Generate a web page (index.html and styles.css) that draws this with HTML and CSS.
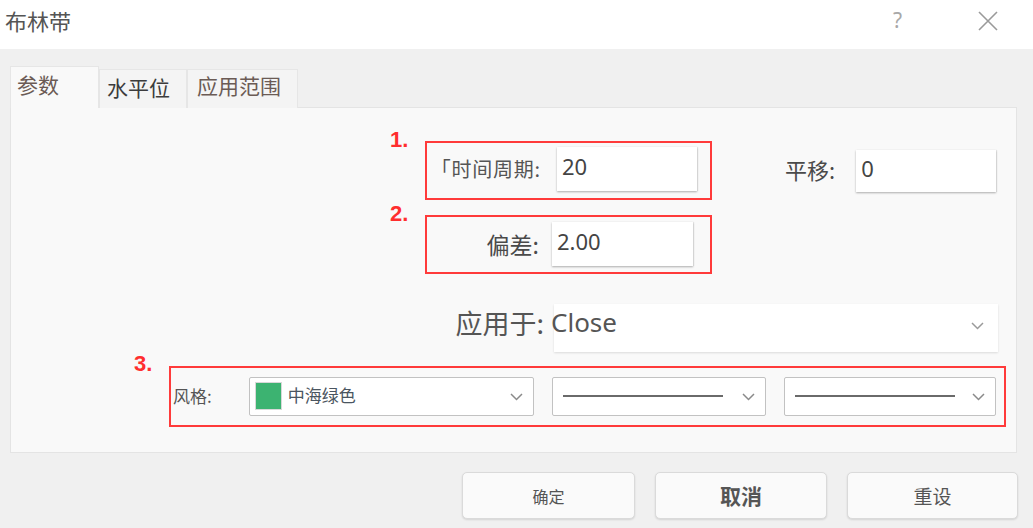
FILE: index.html
```html
<!DOCTYPE html>
<html lang="zh">
<head>
<meta charset="utf-8">
<title>布林带</title>
<link rel="stylesheet" href="styles.css">
</head>
<body>
<div class="dialog">
  <header class="titlebar">
    <span class="title">布林带</span>
    <div class="title-actions">
      <span class="help">?</span>
      <svg class="close" width="20" height="20" viewBox="0 0 20 20"><path d="M1 1 L19 19 M19 1 L1 19" stroke="#9a9a9a" stroke-width="1.6" fill="none"/></svg>
    </div>
  </header>
  <main class="body">
    <nav class="tabs">
      <div class="tab active">参数</div>
      <div class="tab tab-dark">水平位</div>
      <div class="tab tab-range">应用范围</div>
    </nav>
    <section class="panel">
      <div class="row row-period">
        <div class="mark-box box-period">
          <span class="mark">1.</span>
          <span class="label label-sm">「时间周期:</span>
          <div class="input">20</div>
        </div>
        <div class="field-shift">
          <span class="label label-lg">平移:</span>
          <div class="input input-shift">0</div>
        </div>
      </div>
      <div class="row row-dev">
        <div class="mark-box box-dev">
          <span class="mark">2.</span>
          <span class="label label-lg">偏差:</span>
          <div class="input">2.00</div>
        </div>
      </div>
      <div class="row row-apply">
        <span class="apply-label">应用于:</span>
        <div class="apply-select">
          <span class="apply-value">Close</span>
          <svg class="chev" width="13" height="8" viewBox="0 0 13 8"><path d="M1 1 L6.5 6.5 L12 1" stroke="#9a9a9a" stroke-width="1.5" fill="none"/></svg>
        </div>
      </div>
      <div class="row row-style">
        <div class="mark-box box-style">
          <span class="mark mark-3">3.</span>
          <span class="style-label">风格:</span>
          <div class="combo combo-color">
            <span class="swatch"></span>
            <span class="combo-text">中海绿色</span>
            <svg class="chev" width="13" height="8" viewBox="0 0 13 8"><path d="M1 1 L6.5 6.5 L12 1" stroke="#8a8a8a" stroke-width="1.5" fill="none"/></svg>
          </div>
          <div class="combo combo-line1">
            <span class="line"></span>
            <svg class="chev" width="13" height="8" viewBox="0 0 13 8"><path d="M1 1 L6.5 6.5 L12 1" stroke="#8a8a8a" stroke-width="1.5" fill="none"/></svg>
          </div>
          <div class="combo combo-line2">
            <span class="line"></span>
            <svg class="chev" width="13" height="8" viewBox="0 0 13 8"><path d="M1 1 L6.5 6.5 L12 1" stroke="#8a8a8a" stroke-width="1.5" fill="none"/></svg>
          </div>
        </div>
      </div>
    </section>
    <div class="buttons">
      <button class="btn btn-ok">确定</button>
      <button class="btn btn-cancel">取消</button>
      <button class="btn btn-reset">重设</button>
    </div>
  </main>
</div>
</body>
</html>
```

FILE: styles.css
```css
* { box-sizing: border-box; }
html, body { margin: 0; padding: 0; }
body {
  width: 1033px;
  height: 528px;
  overflow: hidden;
  background: #f0f0f0;
  font-family: "Noto Sans", "Noto Sans CJK SC", sans-serif;
  color: #555;
}
.dialog { width: 1033px; height: 528px; }

.titlebar {
  height: 49px;
  background: #ffffff;
  display: flex;
  align-items: center;
  justify-content: space-between;
  padding: 0 35px 0 5px;
}
.title {
  font-family: "Noto Sans CJK SC", sans-serif;
  font-size: 22px;
  color: #555;
  line-height: 1;
  margin-top: -9px;
}
.title-actions {
  display: flex;
  align-items: center;
  gap: 76px;
  margin-top: -8px;
}
.help {
  font-family: "Noto Sans", sans-serif;
  font-size: 21px;
  color: #a8a8a8;
  line-height: 1;
}
.close { display: block; }

.tabs {
  display: flex;
  align-items: flex-end;
  margin: 18px 0 0 10px;
  height: 41px;
  position: relative;
  z-index: 1;
  margin-bottom: -1px;
}
.tab {
  font-family: "Noto Sans CJK SC", sans-serif;
  font-size: 21px;
  line-height: 1;
  color: #6b5b55;
  height: 39px;
  background: #f4f4f4;
  border: 1px solid #e6e6e6;
  border-bottom: none;
  display: flex;
  align-items: center;
  padding: 0 11px 7px 10px;
}
.tab.active {
  height: 42px;
  width: 89px;
  background: #f9f9f9;
  padding: 7px 0 0 6px;
  align-items: flex-start;
}
.tab-dark { color: #3c3c3c; width: 88px; padding-left: 7px; padding-bottom: 3px; }
.tab-range { width: 111px; padding-left: 9px; }

.panel {
  margin-left: 10px;
  width: 1007px;
  height: 346px;
  background: #f9f9f9;
  border: 1px solid #e4e4e4;
  padding-top: 33px;
}

.row { display: flex; align-items: center; }

.mark-box {
  position: relative;
  border: 2px solid #ff3b3b;
  display: flex;
  align-items: center;
}
.mark {
  position: absolute;
  left: -37px;
  top: -14px;
  font-family: "Liberation Sans", sans-serif;
  font-weight: bold;
  font-size: 22px;
  line-height: 1;
  color: #ff2e2e;
}
.mark-3 { left: -37px; top: -15px; }

.label { color: #555; font-family: "Noto Sans CJK SC", sans-serif; line-height: 1; }
.label-sm { font-size: 20px; letter-spacing: 0.8px; }
.label-lg { font-size: 22px; color: #4a4a4a; }

.input {
  background: #fff;
  height: 44px;
  width: 140px;
  font-family: "Noto Sans", sans-serif;
  font-size: 22px;
  color: #444;
  display: flex;
  align-items: center;
  padding: 0 0 6px 5px;
  box-shadow: 0 1px 2px rgba(0,0,0,0.3), 1px 0 1px rgba(0,0,0,0.06);
}

.row-period { margin-left: 414px; }
.box-period {
  width: 287px;
  height: 59px;
  justify-content: flex-end;
  padding-right: 13px;
}
.box-period .label { margin-right: 16px; margin-top: -4px; }
.box-period .input { margin-top: -3px; }

.field-shift { display: flex; align-items: center; margin-left: 73px; }
.field-shift .label { margin-right: 21px; margin-top: -4px; }
.input-shift { height: 42px; }

.row-dev { margin-left: 414px; margin-top: 15px; }
.box-dev {
  width: 287px;
  height: 59px;
  justify-content: flex-end;
  padding-right: 17px;
}
.box-dev .label { margin-right: 13px; font-size: 23px; }
.box-dev .input { width: 141px; margin-top: -1px; }

.row-apply {
  margin-top: 30px;
  justify-content: flex-end;
  padding-right: 18px;
}
.apply-label {
  font-family: "Noto Sans CJK SC", sans-serif;
  font-size: 27px;
  color: #555;
  line-height: 1;
  margin-right: 16px;
  margin-top: -12px;
}
.apply-select {
  width: 444px;
  height: 48px;
  background: #fff;
  box-shadow: 0 1px 2px rgba(0,0,0,0.12);
  display: flex;
  align-items: center;
  justify-content: space-between;
  padding: 0 14px 0 0;
  margin-left: -6px;
}
.apply-value {
  font-family: "Noto Sans", sans-serif;
  font-size: 26px;
  color: #555;
  line-height: 1;
  margin-top: -12px;
  margin-left: -3px;
}
.apply-select .chev { margin-top: -4px; }

.row-style { margin-left: 158px; margin-top: 14px; }
.box-style {
  width: 837px;
  height: 61px;
  padding: 0 8px 0 2px;
}
.style-label {
  width: 76px;
  font-family: "Noto Sans CJK SC", sans-serif;
  font-size: 17px;
  color: #555;
  line-height: 1;
  margin-top: -3px;
}
.combo {
  height: 39px;
  background: #fff;
  border: 1.5px solid #c2c2c2;
  border-radius: 2px;
  display: flex;
  align-items: center;
  justify-content: space-between;
  padding: 0 10px 0 6px;
}
.combo-color { width: 286px; padding-left: 5px; }
.combo-line1 { width: 215px; margin-left: 18px; }
.combo-line2 { width: 213px; margin-left: 18px; }
.swatch {
  width: 27px;
  height: 28px;
  background: #3cb371;
  border: 1px solid #d8d8d8;
  flex: none;
  margin-top: -2px;
}
.combo-text {
  flex: 1;
  margin-left: 6px;
  font-family: "Noto Sans CJK SC", sans-serif;
  font-size: 17px;
  color: #4a5560;
  line-height: 1;
  margin-top: -4px;
}
.line {
  display: block;
  height: 2px;
  width: 160px;
  background: #6a6a6a;
  margin-left: 4px;
  margin-top: -2px;
}
.chev { display: block; flex: none; }

.buttons {
  display: flex;
  justify-content: flex-end;
  gap: 20px;
  padding-right: 15px;
  margin-top: 19px;
}
.btn {
  width: 173px;
  height: 47px;
  background: #fafafa;
  border: 1px solid #dadada;
  border-radius: 5px;
  box-shadow: 0 1px 2px rgba(0,0,0,0.12);
  font-family: "Noto Sans CJK SC", sans-serif;
  color: #555;
  line-height: 1;
  padding: 0;
}
.btn-ok { font-size: 16px; }
.btn-cancel { font-size: 21px; font-weight: bold; color: #555; width: 172px; }
.btn-reset { font-size: 19px; width: 171px; }
```
